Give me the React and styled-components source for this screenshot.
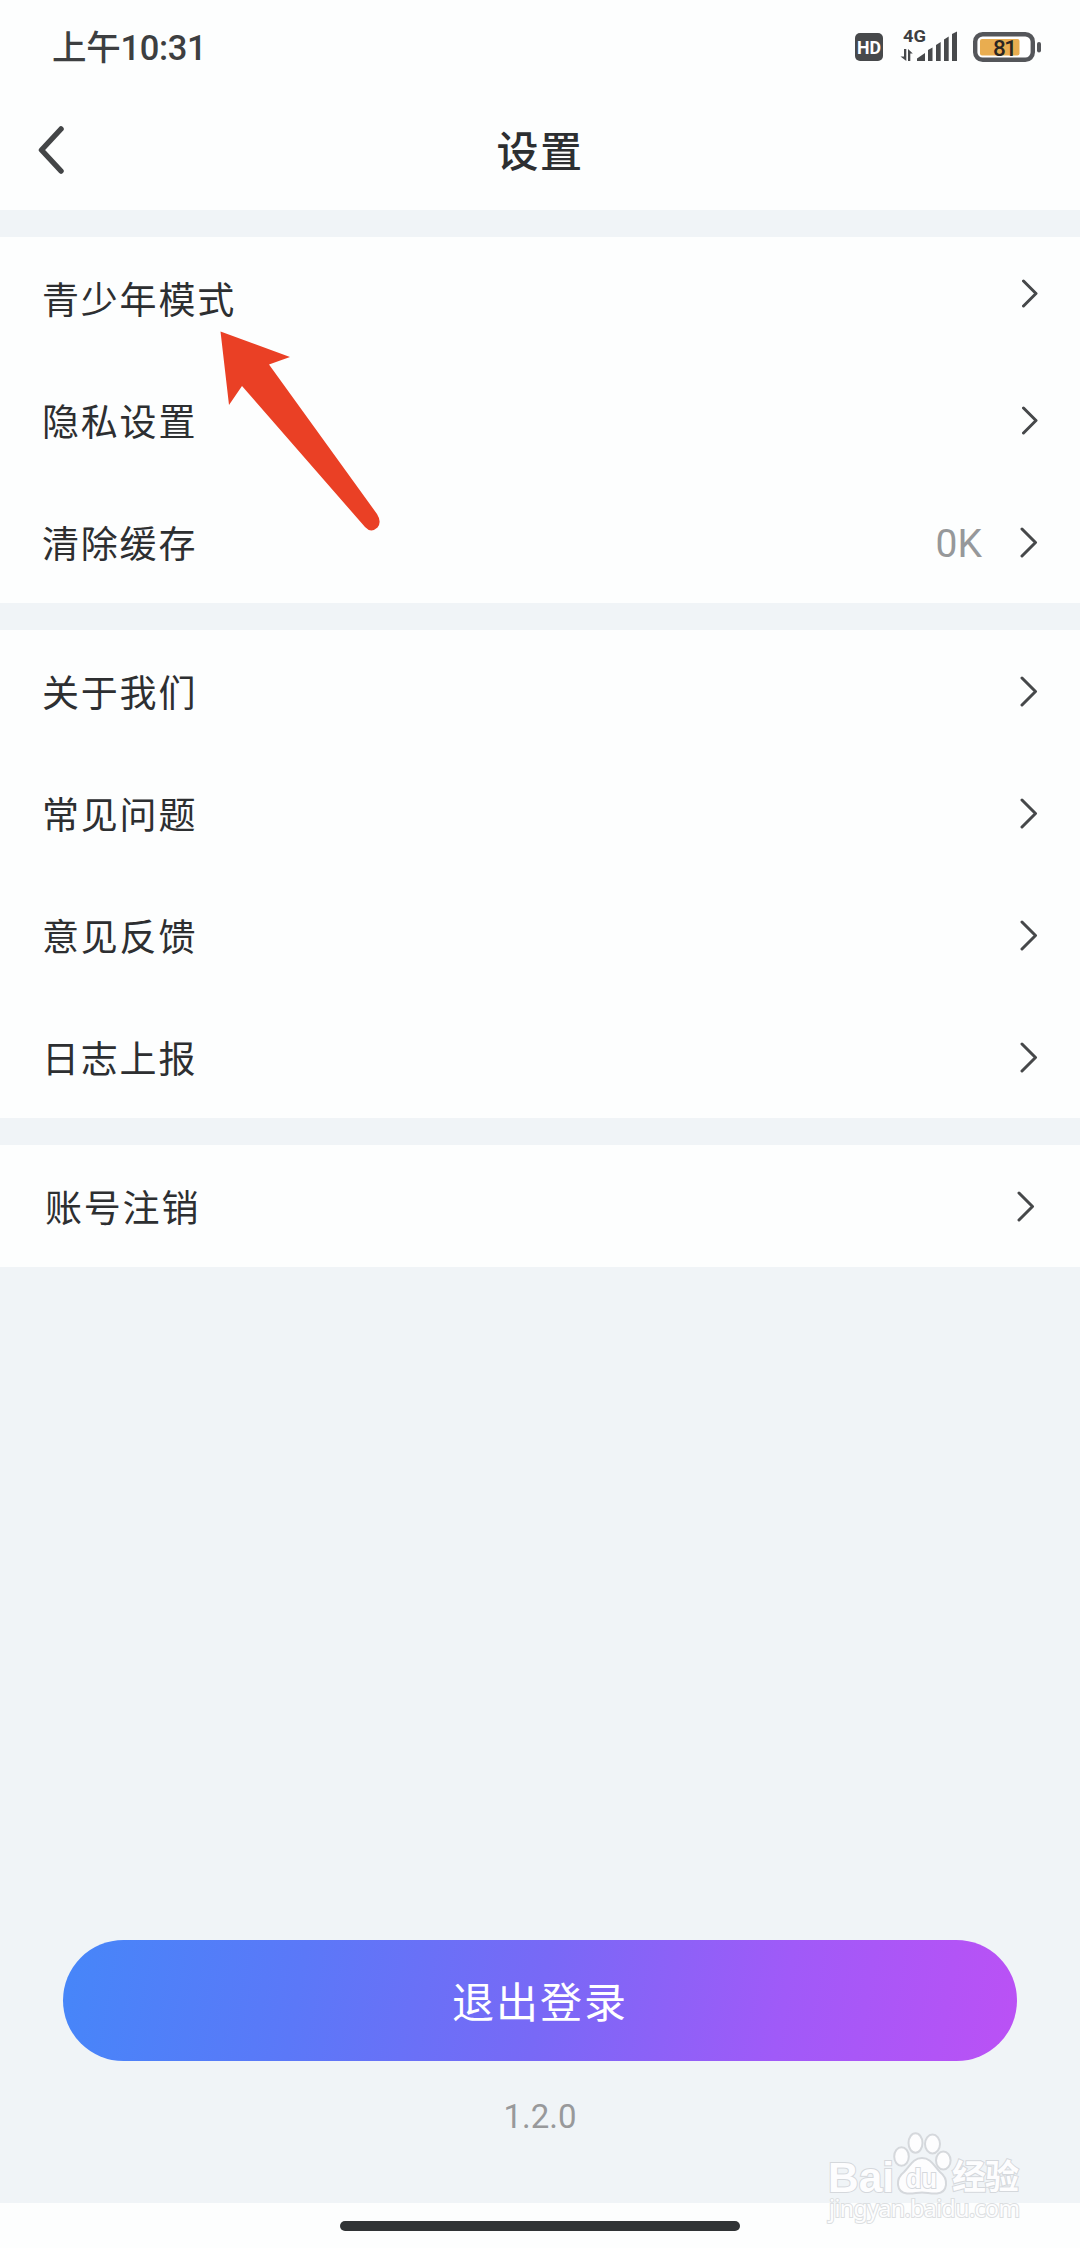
import styled, { createGlobalStyle } from 'styled-components';

const grupos = [
  [
    { label: '青少年模式', seta: 'small', lift: 9 },
    { label: '隐私设置', seta: 'small' },
    { label: '清除缓存', value: '0K' },
  ],
  [
    { label: '关于我们' },
    { label: '常见问题' },
    { label: '意见反馈' },
    { label: '日志上报' },
  ],
  [{ label: '账号注销', inset: 3 }],
];

const Chevron = ({ small, lift }) => (
  <ChevronIcon
    $lift={lift}
    width={small ? 16 : 18}
    height={small ? 29 : 31}
    viewBox={small ? '0 0 16 29' : '0 0 18 31'}
  >
    <path d={small ? 'M1.500 2 L14 14.500 L1.500 27' : 'M2 2 L15.500 15.500 L2 29'} />
  </ChevronIcon>
);

const StatusIcons = () => (
  <svg width="190" height="50" viewBox="853 22 190 50">
    <rect x="855" y="33" width="28" height="28" rx="5" fill="#47494b" />
    <IconText x="857" y="54" fontSize="19" fill="#fff" textLength="24" lengthAdjust="spacingAndGlyphs" $weight="700">HD</IconText>
    <IconText x="903" y="42" fontSize="16.500" fill="#3d3f41" textLength="23" lengthAdjust="spacingAndGlyphs" $weight="700">4G</IconText>
    <g fill="#47494b">
      <path d="M904 49 H906.300 V61 L900.500 56.500 H904 Z" />
      <path d="M910.300 61 H908 V49 L912.800 53.500 H910.300 Z" />
      <path d="M917 61 V58.500 L925 53 V61 Z" />
      <path d="M928 61 V50 L932.500 47.500 V61 Z" />
      <path d="M936 61 V45 L940.700 42 V61 Z" />
      <path d="M944 61 V39.500 L948.700 36.500 V61 Z" />
      <path d="M952 61 V34 L957 31.500 V61 Z" />
    </g>
    <rect x="975.200" y="34.200" width="57.600" height="25.600" rx="7.500" fill="#fff" stroke="#54565a" strokeWidth="4.400" />
    <rect x="980" y="39" width="39.500" height="16.500" rx="2" fill="#e9ad50" />
    <rect x="1037" y="42" width="4" height="10.500" rx="2" fill="#54565a" />
    <IconText x="993" y="55.500" fontSize="22.500" fill="#2b2622" textLength="24" $weight="500">81</IconText>
  </svg>
);

const Watermark = () => (
  <Marca width="200" height="108" viewBox="824 2130 200 108">
    <g fill="#fdfdfe" stroke="#d5d8dc" strokeWidth="2">
      <MarcaText x="828" y="2192" fontSize="43" textLength="66" lengthAdjust="spacingAndGlyphs">Bai</MarcaText>
      <ellipse cx="901.500" cy="2156.500" rx="7.300" ry="9.300" />
      <ellipse cx="915.500" cy="2143" rx="7" ry="9.700" />
      <ellipse cx="932.500" cy="2144" rx="7.500" ry="9.500" />
      <ellipse cx="943.300" cy="2160.500" rx="7.300" ry="9" />
      <path d="M922 2158 C931 2158 934 2166 940 2172 C949 2179 948 2192 937 2193.500 C931 2194 927 2192.500 922 2192.500 C917 2192.500 913 2194 907 2193.500 C896 2192 895 2179 904 2172 C910 2166 913 2158 922 2158 Z" />
      <MarcaText x="906" y="2188" fontSize="27" textLength="31" lengthAdjust="spacingAndGlyphs">du</MarcaText>
      <MarcaText x="952" y="2189" fontSize="34" textLength="67" $cjk>经验</MarcaText>
    </g>
    <Dominio x="829" y="2217" textLength="191">jingyan.baidu.com</Dominio>
  </Marca>
);

const App = () => {
  return (
    <>
      <GlobalStyle />
      <Tela>
        <StatusBar>
          <Hora>上午10:31</Hora>
          <StatusIcons />
        </StatusBar>

        <Header>
          <Voltar aria-label="返回">
            <svg width="28" height="49" viewBox="0 0 28 49">
              <path d="M24 4 L4.500 25 L24 46" />
            </svg>
          </Voltar>
          <Titulo>设置</Titulo>
        </Header>

        <Grupos>
          {grupos.map((itens, i) => (
            <Grupo key={i}>
              {itens.map((item) => (
                <Item key={item.label} $inset={item.inset}>
                  <Label>{item.label}</Label>
                  {item.value && <Valor>{item.value}</Valor>}
                  <Chevron small={item.seta === 'small'} lift={item.lift} />
                </Item>
              ))}
            </Grupo>
          ))}
        </Grupos>

        <Rodape>
          <Sair>退出登录</Sair>
          <Versao>1.2.0</Versao>
        </Rodape>

        <NavBar>
          <Barra />
        </NavBar>

        <Ponteiro width="166" height="206" viewBox="217 328 166 206">
          <path d="M220.500 331.500 L290 357 L269 364.500 L377 514 Q382 522 377.500 527.500 Q371 533.500 365 527 L242 386 L229 405 Z" />
        </Ponteiro>
        <Watermark />
      </Tela>
    </>
  );
};

export default App;

const GlobalStyle = createGlobalStyle`
  * {
    box-sizing: border-box;
    margin: 0;
    padding: 0;
  }

  body {
    background-color: #f0f4f7;
    font-family: "Noto Sans CJK SC", "Noto Sans", sans-serif;
    color: #2d2f31;
  }

  svg {
    display: block;
  }
`

const Tela = styled.div`
  position: relative;
  display: flex;
  flex-direction: column;
  width: 1080px;
  height: 2248px;
  overflow: hidden;
  background-color: #f0f4f7;
`

const StatusBar = styled.div`
  display: flex;
  align-items: center;
  justify-content: space-between;
  height: 94px;
  padding: 0 37px 0 52px;
  background-color: #fdfefe;
`

const Hora = styled.span`
  padding-top: 2px;
  font-family: Roboto, "Noto Sans CJK SC", sans-serif;
  font-size: 34.5px;
  font-weight: 500;
  line-height: 48px;
  letter-spacing: -0.3px;
  color: #3d3f41;
`

const Header = styled.header`
  display: grid;
  grid-template-columns: 100px 1fr 100px;
  align-items: center;
  height: 116px;
  padding-bottom: 6px;
  background-color: #fdfefe;
`

const Voltar = styled.button`
  padding-left: 37px;
  border: none;
  background: none;

  path {
    fill: none;
    stroke: #434547;
    stroke-width: 5.5;
    stroke-linecap: round;
    stroke-linejoin: round;
  }
`

const Titulo = styled.h1`
  font-size: 42px;
  font-weight: 500;
  line-height: 60px;
  letter-spacing: 1.5px;
  text-align: center;
`

const Grupos = styled.main`
  display: flex;
  flex-direction: column;
  flex: 1;
  gap: 27px;
  padding-top: 27px;
`

const Grupo = styled.ul`
  list-style: none;
  background-color: #fdfefe;
`

const Item = styled.li`
  display: flex;
  align-items: center;
  height: 122px;
  padding: 0 ${({ $inset = 0 }) => 42 + $inset}px 0 ${({ $inset = 0 }) => 42 + $inset}px;
`

const Label = styled.span`
  flex: 1;
  font-size: 37px;
  letter-spacing: 1.8px;
`

const Valor = styled.span`
  margin-right: 38px;
  padding-top: 3px;
  font-family: Roboto, sans-serif;
  font-size: 39px;
  line-height: 48px;
  color: #96989a;
`

const ChevronIcon = styled.svg`
  margin-bottom: ${({ $lift = 0 }) => $lift}px;
  fill: none;
  stroke: #46484a;
  stroke-width: 3;
  stroke-linecap: round;
  stroke-linejoin: round;
`

const Rodape = styled.footer`
  display: flex;
  flex-direction: column;
  align-items: center;
  height: 263px;
  padding: 0 63px;
`

const Sair = styled.button`
  width: 100%;
  height: 121px;
  padding-bottom: 2px;
  border: none;
  border-radius: 61px;
  background: linear-gradient(100deg, #4686f9 0%, #5b78f8 25%, #7869f6 50%, #a05af8 75%, #bb51f5 100%);
  color: #fff;
  font-family: inherit;
  font-size: 42px;
  letter-spacing: 2px;
`

const Versao = styled.p`
  margin-top: 32px;
  font-family: Roboto, sans-serif;
  font-size: 33px;
  line-height: 48px;
  color: #98999b;
`

const NavBar = styled.div`
  display: flex;
  justify-content: center;
  height: 45px;
  padding-top: 18px;
  background-color: #fdfefe;
`

const Barra = styled.div`
  width: 400px;
  height: 10px;
  border-radius: 5px;
  background-color: #303335;
`

const Ponteiro = styled.svg`
  position: absolute;
  top: 328px;
  left: 217px;
  fill: #ea4025;
`

const Marca = styled.svg`
  position: absolute;
  top: 2130px;
  left: 824px;
`

const IconText = styled.text`
  font-family: Roboto, sans-serif;
  font-weight: ${({ $weight }) => $weight};
`

const MarcaText = styled.text`
  font-family: ${({ $cjk }) => ($cjk ? '"Noto Sans CJK SC"' : '"Liberation Sans"')}, sans-serif;
  font-weight: 700;
  paint-order: stroke;
`

const Dominio = styled.text`
  font-family: "Noto Sans", sans-serif;
  font-size: 23px;
  fill: #fdfdfe;
  stroke: #dcdfe1;
  stroke-width: 2;
  paint-order: stroke;
`
